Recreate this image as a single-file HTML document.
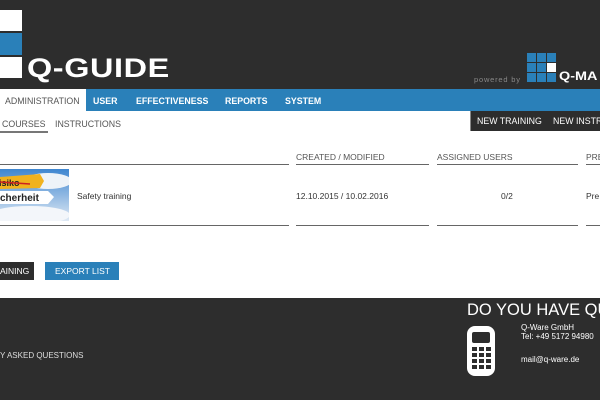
<!DOCTYPE html>
<html><head><meta charset="utf-8"><style>
*{margin:0;padding:0;box-sizing:border-box}
html,body{width:600px;height:400px;overflow:hidden}
body{background:#fff;font-family:"Liberation Sans",sans-serif;position:relative}
.a{position:absolute;white-space:nowrap}
.hd{left:0;top:0;width:600px;height:89px;background:#2d2d2d}
.nav{left:0;top:89px;width:600px;height:22px;background:#2a80b9}
.t{font-size:8.5px;color:#333}
.hline{height:1px;background:#666}
.n{position:absolute;top:7px;font-size:8.8px;color:#fff;font-weight:bold}
</style></head><body>
<div class="a hd"></div>
<div class="a" style="left:0;top:10px;width:22px;height:21px;background:#fff"></div>
<div class="a" style="left:0;top:33px;width:22px;height:22px;background:#2a80b9"></div>
<div class="a" style="left:0;top:57px;width:22px;height:21px;background:#fff"></div>
<div class="a" style="left:27px;top:54px;font-size:27px;font-weight:bold;color:#fff;letter-spacing:0.5px;line-height:28px;transform:scaleX(1.2);transform-origin:left">Q-GUIDE</div>
<div class="a" style="left:474px;top:75px;font-size:7.5px;color:#888;letter-spacing:.8px">powered by</div>
<svg class="a" style="left:527px;top:53px" width="31" height="31">
<g fill="#2a80b9">
<rect x="0" y="0" width="9" height="9"/><rect x="10" y="0" width="9" height="9"/><rect x="20" y="0" width="9" height="9"/>
<rect x="0" y="10" width="9" height="9"/><rect x="10" y="10" width="9" height="9"/>
<rect x="0" y="20" width="9" height="9"/><rect x="10" y="20" width="9" height="9"/><rect x="20" y="20" width="9" height="9"/>
</g><rect x="20" y="10" width="9" height="9" fill="#fff"/></svg>
<div class="a" style="left:559px;top:69px;font-size:12px;font-weight:bold;color:#fff;transform:scaleX(1.2);transform-origin:left">Q-MA</div>
<div class="a nav"></div>
<div class="a" style="left:0;top:89px;width:86px;height:22px;background:#fff"></div>
<div class="a" style="left:0;top:89px;width:600px;height:22px;overflow:hidden">
<span class="n" style="left:5px;color:#555;font-weight:normal">ADMINISTRATION</span>
<span class="n" style="left:93px">USER</span>
<span class="n" style="left:136px">EFFECTIVENESS</span>
<span class="n" style="left:225px">REPORTS</span>
<span class="n" style="left:285px">SYSTEM</span>
</div>
<div class="a t" style="left:2px;top:119px;color:#555;font-size:8.8px">COURSES</div>
<div class="a" style="left:0;top:131px;width:48px;height:2px;background:#777"></div>
<div class="a t" style="left:55px;top:119px;color:#555;font-size:8.8px">INSTRUCTIONS</div>
<div class="a" style="left:470px;top:111px;width:130px;height:20px;background:#2d2d2d;border-left:1px solid #888;overflow:hidden">
<div class="a" style="left:6px;top:5px;font-size:8.8px;color:#fff">NEW TRAINING</div>
<div class="a" style="left:82px;top:5px;font-size:8.8px;color:#fff">NEW INSTRUCTION</div>
</div>
<div class="a t" style="left:296px;top:152px;color:#555">CREATED / MODIFIED</div>
<div class="a t" style="left:437px;top:152px;color:#555">ASSIGNED USERS</div>
<div class="a t" style="left:586px;top:152px;color:#555">PRE</div>
<div class="a hline" style="left:0;top:164px;width:289px"></div>
<div class="a hline" style="left:296px;top:164px;width:133px"></div>
<div class="a hline" style="left:437px;top:164px;width:141px"></div>
<div class="a hline" style="left:586px;top:164px;width:14px"></div>
<svg class="a" style="left:0;top:169px" width="69" height="52">
<defs><linearGradient id="s" x1="0" y1="0" x2="0" y2="1"><stop offset="0" stop-color="#3f86d0"/><stop offset="1" stop-color="#dfe9f4"/></linearGradient></defs>
<rect width="69" height="52" fill="url(#s)"/>
<ellipse cx="48" cy="12" rx="24" ry="8" fill="#eef3f8"/>
<ellipse cx="30" cy="46" rx="40" ry="9" fill="#f3f6fa"/>
<polygon points="0,8 40,5 44,12 40,19 0,20" fill="#f1b21e"/>
<text x="-1" y="17" font-size="9" font-family="Liberation Sans" fill="#222" font-weight="bold">isiko</text>
<line x1="0" y1="13" x2="30" y2="15" stroke="#c22" stroke-width="1.5"/>
<polygon points="0,22 48,22 54,28 48,35 0,35" fill="#fff"/>
<text x="0" y="32" font-size="10" font-family="Liberation Sans" fill="#222" font-weight="bold">cherheit</text>
</svg>
<div class="a" style="left:77px;top:191px;font-size:8.5px;color:#333">Safety training</div>
<div class="a" style="left:296px;top:191px;font-size:8.5px;color:#333">12.10.2015 / 10.02.2016</div>
<div class="a" style="left:501px;top:191px;font-size:8.5px;color:#333">0/2</div>
<div class="a" style="left:586px;top:191px;font-size:8.5px;color:#333">Pre</div>
<div class="a hline" style="left:0;top:225px;width:289px"></div>
<div class="a hline" style="left:296px;top:225px;width:133px"></div>
<div class="a hline" style="left:437px;top:225px;width:141px"></div>
<div class="a hline" style="left:586px;top:225px;width:14px"></div>
<div class="a" style="left:0;top:262px;width:34px;height:18px;background:#2d2d2d"></div>
<div class="a" style="left:0;top:266px;font-size:8.5px;color:#fff">AINING</div>
<div class="a" style="left:45px;top:262px;width:74px;height:18px;background:#2a80b9"></div>
<div class="a" style="left:55px;top:266px;font-size:8.5px;color:#fff">EXPORT LIST</div>
<div class="a" style="left:0;top:298px;width:600px;height:102px;background:#2d2d2d;overflow:hidden">
<div class="a" style="left:467px;top:3px;font-size:16.5px;color:#fff">DO YOU HAVE QUESTIONS?</div>
<div class="a" style="left:521px;top:25px;font-size:8px;color:#fff;line-height:9px">Q-Ware GmbH<br>Tel: +49 5172 94980</div>
</div>
<div class="a" style="left:0;top:351px;font-size:8px;color:#ddd">Y ASKED QUESTIONS</div>
<svg class="a" style="left:467px;top:326px" width="28" height="50">
<rect x="0" y="0" width="28" height="50" rx="8" fill="#fff"/>
<rect x="5" y="6" width="18" height="11" rx="2" fill="#2d2d2d"/>
<g fill="#2d2d2d">
<rect x="5" y="21" width="5" height="4"/><rect x="12" y="21" width="5" height="4"/><rect x="19" y="21" width="5" height="4"/>
<rect x="5" y="27" width="5" height="4"/><rect x="12" y="27" width="5" height="4"/><rect x="19" y="27" width="5" height="4"/>
<rect x="5" y="33" width="5" height="4"/><rect x="12" y="33" width="5" height="4"/><rect x="19" y="33" width="5" height="4"/>
<rect x="5" y="39" width="5" height="4"/><rect x="12" y="39" width="5" height="4"/><rect x="19" y="39" width="5" height="4"/>
</g></svg>
<div class="a" style="left:521px;top:355px;font-size:8px;color:#fff">mail@q-ware.de</div>
</body></html>
